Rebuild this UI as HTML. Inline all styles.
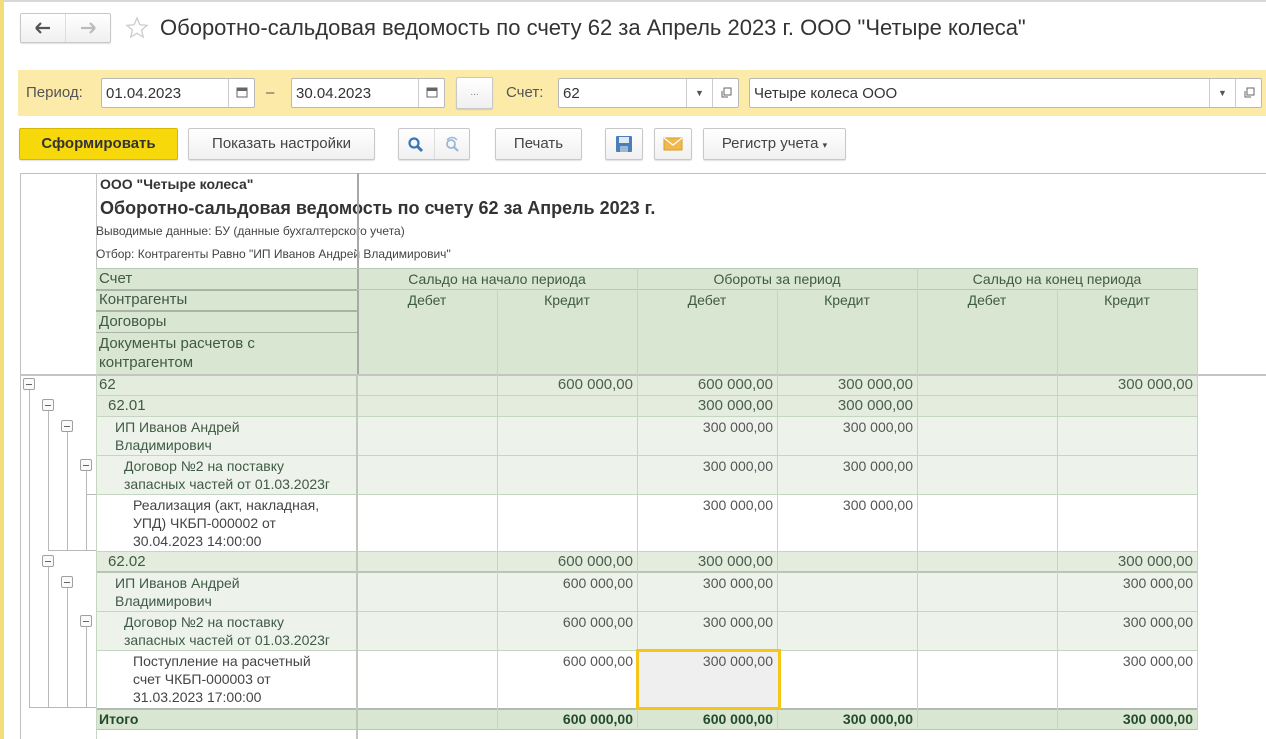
<!DOCTYPE html>
<html><head><meta charset="utf-8">
<style>
*{box-sizing:border-box;margin:0;padding:0}
body{width:1266px;height:739px;overflow:hidden;background:#fff;font-family:"Liberation Sans",Arial,sans-serif;position:relative;color:#333}
.a{position:absolute}
.btn{position:absolute;border:1px solid #c8c8c8;border-radius:2px;background:linear-gradient(#fff,#f0f0f0);box-shadow:0 1px 1px rgba(0,0,0,.12);font-size:15px;color:#444;text-align:center;line-height:30px;height:32px}
.inp{position:absolute;background:#fff;border:1px solid #b9b9b9;border-radius:2px;height:30px;font-size:15px;line-height:30px;padding-left:4px;color:#333}
.ib{position:absolute;top:0;height:28px;line-height:28px;border-left:1px solid #ccc;width:26px;text-align:center;font-size:9px;color:#555}
.c{position:absolute;font-size:14px;line-height:18px;overflow:hidden}
.hd{color:#3f5a45;text-align:center}
.num{text-align:right;padding-right:4px;color:#555}
.vl{position:absolute;width:1px;background:#b8b8b8}
.mb{position:absolute;width:12px;height:12px;border:1px solid #a0a0a0;border-radius:2px;background:#fafafa}
.mb:after{content:"";position:absolute;left:2px;right:2px;top:5px;height:1px;background:#666}
</style></head><body>
<div class="a" style="left:0;top:0;width:1266px;height:2px;background:#d8d8d8"></div>
<div class="a" style="left:0;top:0;width:4px;height:739px;background:#f3dc7a"></div>

<div class="btn" style="left:20px;top:13px;width:91px;height:30px"></div>
<div class="a" style="left:65px;top:14px;width:1px;height:28px;background:#ddd"></div>
<svg class="a" style="left:34px;top:21px" width="18" height="14"><path d="M2 7H16M2 7L7 2M2 7L7 12" stroke="#555" stroke-width="2.2" fill="none"/></svg>
<svg class="a" style="left:79px;top:21px" width="18" height="14"><path d="M2 7H16M16 7L11 2M16 7L11 12" stroke="#bbb" stroke-width="2.2" fill="none"/></svg>
<svg class="a" style="left:125px;top:16px" width="24" height="24"><path d="M12 2L14.9 8.8 22 9.4 16.6 14 18.2 21 12 17.3 5.8 21 7.4 14 2 9.4 9.1 8.8Z" fill="none" stroke="#ccc" stroke-width="1.3"/></svg>
<div class="a" style="left:160px;top:13px;font-size:22px;color:#333;white-space:nowrap;line-height:30px">Оборотно-сальдовая ведомость по счету 62 за Апрель 2023 г. ООО "Четыре колеса"</div>

<div class="a" style="left:18px;top:70px;width:1248px;height:46px;background:#fbeaa8"></div>
<div class="a" style="left:26px;top:84px;font-size:15px;color:#555">Период:</div>
<div class="inp" style="left:101px;top:78px;width:154px">01.04.2023<div class="ib" style="right:0"><svg width="12" height="28"><rect x="1" y="9" width="10" height="9" fill="none" stroke="#666"/><rect x="1" y="9" width="10" height="3" fill="#666"/></svg></div></div>
<div class="a" style="left:266px;top:84px;font-size:15px;color:#555">–</div>
<div class="inp" style="left:291px;top:78px;width:154px">30.04.2023<div class="ib" style="right:0"><svg width="12" height="28"><rect x="1" y="9" width="10" height="9" fill="none" stroke="#666"/><rect x="1" y="9" width="10" height="3" fill="#666"/></svg></div></div>
<div class="btn" style="left:456px;top:77px;width:37px;font-size:10px;color:#888">...</div>
<div class="a" style="left:506px;top:84px;font-size:15px;color:#555">Счет:</div>
<div class="inp" style="left:558px;top:78px;width:181px">62<div class="ib" style="right:26px">▼</div><div class="ib" style="right:0"><svg width="14" height="28"><rect x="5" y="9" width="7" height="7" fill="none" stroke="#666"/><path d="M3 12V18H9" fill="none" stroke="#666"/></svg></div></div>
<div class="inp" style="left:749px;top:78px;width:513px">Четыре колеса ООО<div class="ib" style="right:26px">▼</div><div class="ib" style="right:0"><svg width="14" height="28"><rect x="5" y="9" width="7" height="7" fill="none" stroke="#666"/><path d="M3 12V18H9" fill="none" stroke="#666"/></svg></div></div>

<div class="btn" style="left:19px;top:128px;width:159px;background:#f7d90b;border-color:#d6b800;font-weight:bold;color:#333">Сформировать</div>
<div class="btn" style="left:188px;top:128px;width:187px">Показать настройки</div>
<div class="btn" style="left:398px;top:128px;width:72px"></div>
<div class="a" style="left:434px;top:129px;width:1px;height:30px;background:#ddd"></div>
<svg class="a" style="left:407px;top:136px" width="18" height="18"><circle cx="7" cy="7" r="4.5" fill="none" stroke="#3a77b5" stroke-width="2.2"/><path d="M10 10L15 15" stroke="#3a77b5" stroke-width="3"/></svg>
<svg class="a" style="left:443px;top:135px" width="20" height="20"><circle cx="8" cy="9" r="4" fill="none" stroke="#9ab8d6" stroke-width="1.8"/><path d="M11 12L15 16" stroke="#9ab8d6" stroke-width="2.2"/><path d="M4 5Q9 0 14 5" fill="none" stroke="#9ab8d6" stroke-width="1.5"/></svg>
<div class="btn" style="left:495px;top:128px;width:87px">Печать</div>
<div class="btn" style="left:605px;top:128px;width:38px"></div>
<svg class="a" style="left:615px;top:135px" width="18" height="18"><rect x="1" y="1" width="16" height="16" rx="1" fill="#4a7fb9"/><rect x="4" y="2" width="10" height="6" fill="#dfe9f3"/><rect x="5" y="11" width="8" height="6" fill="#9bb8d7"/></svg>
<div class="btn" style="left:654px;top:128px;width:38px"></div>
<svg class="a" style="left:663px;top:137px" width="20" height="14"><rect x="1" y="1" width="18" height="12" fill="#f0b94a" stroke="#d99a2a"/><path d="M1 1L10 8 19 1" fill="none" stroke="#fff" stroke-width="1.3"/></svg>
<div class="btn" style="left:703px;top:128px;width:143px">Регистр учета <span style="font-size:9px">▾</span></div>

<div class="a" style="left:20px;top:173px;width:1246px;height:1px;background:#c0c0c0"></div>
<div class="a" style="left:20px;top:173px;width:1px;height:566px;background:#c0c0c0"></div>
<div class="a" style="left:96px;top:173px;width:1px;height:95px;background:#c8c8c8"></div>
<div class="a" style="left:100px;top:176px;font-size:14px;font-weight:bold;color:#333">ООО "Четыре колеса"</div>
<div class="a" style="left:100px;top:198px;font-size:18px;font-weight:bold;color:#333;white-space:nowrap">Оборотно-сальдовая ведомость по счету 62 за Апрель 2023 г.</div>
<div class="a" style="left:96px;top:224px;font-size:12px;color:#444;white-space:nowrap">Выводимые данные: БУ (данные бухгалтерского учета)</div>
<div class="a" style="left:96px;top:247px;font-size:12px;color:#444;white-space:nowrap">Отбор: Контрагенты Равно "ИП Иванов Андрей Владимирович"</div>

<div class="a" style="left:96px;top:268px;width:1101px;height:106px;background:#d8e6d2"></div>
<div class="a" style="left:357px;top:173px;width:2px;height:201px;background:#a8a8a8"></div>
<div class="a" style="left:96px;top:268px;width:1101px;height:1px;background:#b8c8b4"></div>
<div class="a" style="left:96px;top:289px;width:261px;height:2px;background:#a8b4a6"></div>
<div class="a" style="left:96px;top:310px;width:261px;height:2px;background:#a8b4a6"></div>
<div class="a" style="left:96px;top:332px;width:261px;height:1px;background:#a8b4a6"></div>
<div class="a" style="left:357px;top:289px;width:840px;height:1px;background:#b8c8b4"></div>
<div class="c hd" style="left:99px;top:270px;text-align:left;font-size:15px">Счет</div>
<div class="c hd" style="left:99px;top:291px;text-align:left;font-size:15px">Контрагенты</div>
<div class="c hd" style="left:99px;top:313px;text-align:left;font-size:15px">Договоры</div>
<div class="c hd" style="left:99px;top:334px;text-align:left;font-size:15px;line-height:19px">Документы расчетов с<br>контрагентом</div>
<div class="c hd" style="left:357px;top:270px;width:280px">Сальдо на начало периода</div>
<div class="c hd" style="left:637px;top:270px;width:280px">Обороты за период</div>
<div class="c hd" style="left:917px;top:270px;width:280px">Сальдо на конец периода</div>
<div class="c hd" style="left:357px;top:291px;width:140px">Дебет</div>
<div class="c hd" style="left:497px;top:291px;width:140px">Кредит</div>
<div class="c hd" style="left:637px;top:291px;width:140px">Дебет</div>
<div class="c hd" style="left:777px;top:291px;width:140px">Кредит</div>
<div class="c hd" style="left:917px;top:291px;width:140px">Дебет</div>
<div class="c hd" style="left:1057px;top:291px;width:140px">Кредит</div>
<div class="a" style="left:20px;top:374px;width:1246px;height:2px;background:#c4c4c4"></div>

<div class="a" style="left:96px;top:376px;width:1101px;height:40px;background:#e3ecdd"></div>
<div class="a" style="left:96px;top:416px;width:1101px;height:78px;background:#edf3ea"></div>
<div class="a" style="left:96px;top:494px;width:1101px;height:57px;background:#fff"></div>
<div class="a" style="left:96px;top:551px;width:1101px;height:21px;background:#e3ecdd"></div>
<div class="a" style="left:96px;top:572px;width:1101px;height:78px;background:#edf3ea"></div>
<div class="a" style="left:96px;top:650px;width:1101px;height:58px;background:#fff"></div>
<div class="a" style="left:96px;top:708px;width:1101px;height:22px;background:#d8e6d2"></div>
<div class="a" style="left:96px;top:395px;width:1101px;height:1px;background:#c6d4c2"></div>
<div class="a" style="left:96px;top:416px;width:1101px;height:1px;background:#c6d4c2"></div>
<div class="a" style="left:96px;top:455px;width:1101px;height:1px;background:#c6d4c2"></div>
<div class="a" style="left:96px;top:494px;width:1101px;height:1px;background:#c6d4c2"></div>
<div class="a" style="left:96px;top:551px;width:1101px;height:1px;background:#c6d4c2"></div>
<div class="a" style="left:96px;top:571px;width:1101px;height:2px;background:#b8c4b6"></div>
<div class="a" style="left:96px;top:611px;width:1101px;height:1px;background:#c6d4c2"></div>
<div class="a" style="left:96px;top:650px;width:1101px;height:1px;background:#c6d4c2"></div>
<div class="a" style="left:96px;top:708px;width:1101px;height:2px;background:#b0bcae"></div>
<div class="a" style="left:96px;top:729px;width:1101px;height:1px;background:#b8c4b6"></div>
<div class="a" style="left:96px;top:374px;width:1px;height:365px;background:#c6d4c2"></div>
<div class="a" style="left:356px;top:374px;width:2px;height:365px;background:#c0c8be"></div>
<div class="a" style="left:497px;top:289px;width:1px;height:441px;background:#c6d4c2"></div>
<div class="a" style="left:637px;top:268px;width:1px;height:462px;background:#c6d4c2"></div>
<div class="a" style="left:777px;top:289px;width:1px;height:441px;background:#c6d4c2"></div>
<div class="a" style="left:917px;top:268px;width:1px;height:462px;background:#c6d4c2"></div>
<div class="a" style="left:1057px;top:289px;width:1px;height:441px;background:#c6d4c2"></div>
<div class="a" style="left:1197px;top:268px;width:1px;height:462px;background:#c6d4c2"></div>

<div class="c" style="left:99px;top:376px;color:#3f5a45;font-size:15px">62</div>
<div class="c" style="left:108px;top:397px;color:#3f5a45;font-size:15px">62.01</div>
<div class="c" style="left:115px;top:418px;color:#3f5a45;font-size:14px">ИП Иванов Андрей<br>Владимирович</div>
<div class="c" style="left:124px;top:457px;color:#3f5a45">Договор №2 на поставку<br>запасных частей от 01.03.2023г</div>
<div class="c" style="left:133px;top:496px;color:#444">Реализация (акт, накладная,<br>УПД) ЧКБП-000002 от<br>30.04.2023 14:00:00</div>
<div class="c" style="left:108px;top:553px;color:#3f5a45;font-size:15px">62.02</div>
<div class="c" style="left:115px;top:574px;color:#3f5a45;font-size:14px">ИП Иванов Андрей<br>Владимирович</div>
<div class="c" style="left:124px;top:613px;color:#3f5a45">Договор №2 на поставку<br>запасных частей от 01.03.2023г</div>
<div class="c" style="left:133px;top:652px;color:#444">Поступление на расчетный<br>счет ЧКБП-000003 от<br>31.03.2023 17:00:00</div>
<div class="c" style="left:99px;top:710px;color:#234a2c;font-weight:bold">Итого</div>

<div class="a" style="left:636px;top:649px;width:145px;height:61px;background:#efefef;border:3px solid #f5c518"></div>

<div class="c num" style="left:497px;top:376px;width:140px;font-size:15px;color:#4a5f50">600 000,00</div>
<div class="c num" style="left:637px;top:376px;width:140px;font-size:15px;color:#4a5f50">600 000,00</div>
<div class="c num" style="left:777px;top:376px;width:140px;font-size:15px;color:#4a5f50">300 000,00</div>
<div class="c num" style="left:1057px;top:376px;width:140px;font-size:15px;color:#4a5f50">300 000,00</div>
<div class="c num" style="left:637px;top:397px;width:140px;font-size:15px;color:#4a5f50">300 000,00</div>
<div class="c num" style="left:777px;top:397px;width:140px;font-size:15px;color:#4a5f50">300 000,00</div>
<div class="c num" style="left:637px;top:418px;width:140px">300 000,00</div>
<div class="c num" style="left:777px;top:418px;width:140px">300 000,00</div>
<div class="c num" style="left:637px;top:457px;width:140px">300 000,00</div>
<div class="c num" style="left:777px;top:457px;width:140px">300 000,00</div>
<div class="c num" style="left:637px;top:496px;width:140px">300 000,00</div>
<div class="c num" style="left:777px;top:496px;width:140px">300 000,00</div>
<div class="c num" style="left:497px;top:553px;width:140px;font-size:15px;color:#4a5f50">600 000,00</div>
<div class="c num" style="left:637px;top:553px;width:140px;font-size:15px;color:#4a5f50">300 000,00</div>
<div class="c num" style="left:1057px;top:553px;width:140px;font-size:15px;color:#4a5f50">300 000,00</div>
<div class="c num" style="left:497px;top:574px;width:140px">600 000,00</div>
<div class="c num" style="left:637px;top:574px;width:140px">300 000,00</div>
<div class="c num" style="left:1057px;top:574px;width:140px">300 000,00</div>
<div class="c num" style="left:497px;top:613px;width:140px">600 000,00</div>
<div class="c num" style="left:637px;top:613px;width:140px">300 000,00</div>
<div class="c num" style="left:1057px;top:613px;width:140px">300 000,00</div>
<div class="c num" style="left:497px;top:652px;width:140px">600 000,00</div>
<div class="c num" style="left:637px;top:652px;width:140px">300 000,00</div>
<div class="c num" style="left:1057px;top:652px;width:140px">300 000,00</div>
<div class="c num" style="left:497px;top:710px;width:140px;font-weight:bold;color:#234a2c">600 000,00</div>
<div class="c num" style="left:637px;top:710px;width:140px;font-weight:bold;color:#234a2c">600 000,00</div>
<div class="c num" style="left:777px;top:710px;width:140px;font-weight:bold;color:#234a2c">300 000,00</div>
<div class="c num" style="left:1057px;top:710px;width:140px;font-weight:bold;color:#234a2c">300 000,00</div>

<div class="vl" style="left:29px;top:390px;height:318px"></div>
<div class="a" style="left:29px;top:707px;width:67px;height:1px;background:#b8b8b8"></div>
<div class="vl" style="left:48px;top:411px;height:140px"></div>
<div class="a" style="left:48px;top:550px;width:48px;height:1px;background:#b8b8b8"></div>
<div class="vl" style="left:48px;top:567px;height:141px"></div>
<div class="vl" style="left:67px;top:432px;height:119px"></div>
<div class="vl" style="left:67px;top:588px;height:120px"></div>
<div class="vl" style="left:86px;top:471px;height:80px"></div>
<div class="vl" style="left:86px;top:627px;height:81px"></div>
<div class="a" style="left:86px;top:494px;width:10px;height:1px;background:#b8b8b8"></div>
<div class="mb" style="left:23px;top:378px"></div>
<div class="mb" style="left:42px;top:399px"></div>
<div class="mb" style="left:61px;top:420px"></div>
<div class="mb" style="left:80px;top:459px"></div>
<div class="mb" style="left:42px;top:555px"></div>
<div class="mb" style="left:61px;top:576px"></div>
<div class="mb" style="left:80px;top:615px"></div>
</body></html>
